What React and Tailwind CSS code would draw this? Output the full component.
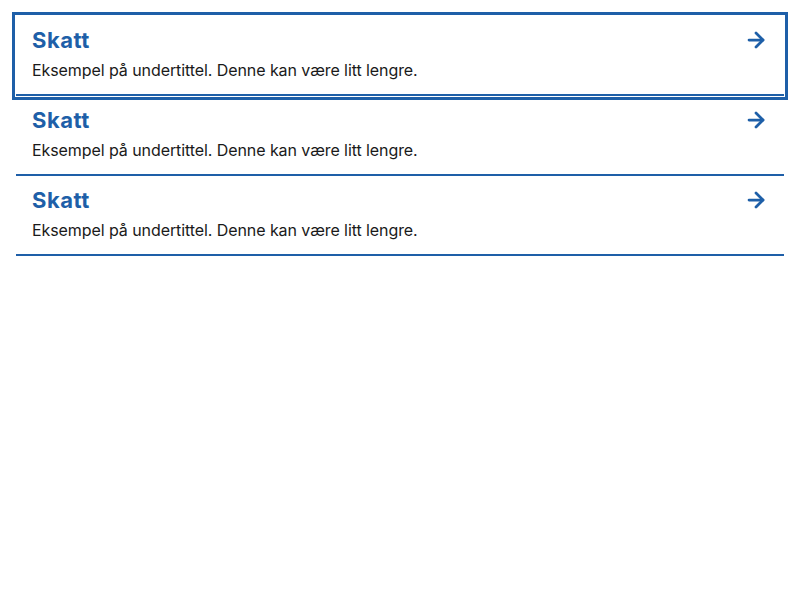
import React from 'react';
import { ArrowRight } from 'lucide-react';

const items = [
  { id: 1, title: 'Skatt', description: 'Eksempel på undertittel. Denne kan være litt lengre.', focused: true },
  { id: 2, title: 'Skatt', description: 'Eksempel på undertittel. Denne kan være litt lengre.' },
  { id: 3, title: 'Skatt', description: 'Eksempel på undertittel. Denne kan være litt lengre.' },
];

const LinkItem = ({ item }) => (
  <a
    href="#"
    className={`flex flex-col gap-1 border-b-2 border-[#1e5fa8] px-4 pt-[10px] pb-[12px] no-underline ${
      item.focused ? 'outline-[3px] outline-solid outline-[#1e5fa8] outline-offset-1' : ''
    }`}
  >
    <div className="flex items-center justify-between">
      <span className="text-[22px] leading-[28px] font-bold tracking-[0.5px] text-[#1e5fa8]">{item.title}</span>
      <ArrowRight size={24} strokeWidth={2.75} className="text-[#1e5fa8]" />
    </div>
    <p className="text-base leading-6 tracking-[-0.08px] text-[#1a1a1a]">{item.description}</p>
  </a>
);

const App = () => {
  return (
    <div className="min-h-screen bg-white p-4" style={{ fontFamily: 'Inter, "Noto Sans", sans-serif' }}>
      <div className="flex flex-col">
        {items.map((item) => (
          <LinkItem key={item.id} item={item} />
        ))}
      </div>
    </div>
  );
};

export default App;
